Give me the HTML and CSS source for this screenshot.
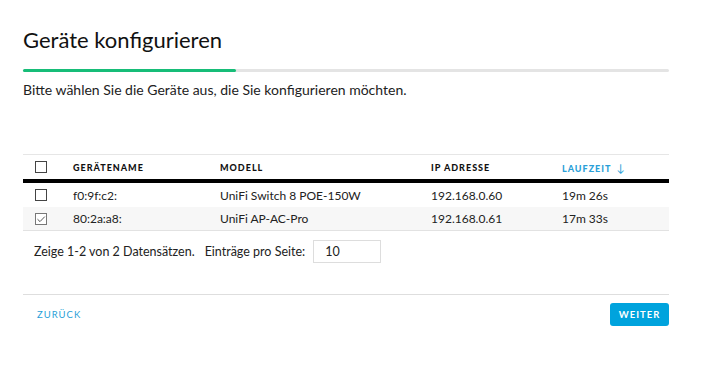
FILE: index.html
```html
<!DOCTYPE html>
<html lang="de">
<head>
<meta charset="utf-8">
<link rel="stylesheet" href="styles.css">
</head>
<body>
<div class="wizard">
  <h1 class="title">Geräte konfigurieren</h1>
  <div class="progress"><div class="progress-fill" style="width:33%"></div></div>
  <p class="subtitle">Bitte wählen Sie die Geräte aus, die Sie konfigurieren möchten.</p>

  <div class="table">
    <div class="row head">
      <div class="cell c-check"><span class="box"></span></div>
      <div class="cell c-name">Gerätename</div>
      <div class="cell c-model">Modell</div>
      <div class="cell c-ip">IP Adresse</div>
      <div class="cell c-up sorted">Laufzeit <span class="arrow">↓</span></div>
    </div>
    <div class="row">
      <div class="cell c-check"><span class="box"></span></div>
      <div class="cell c-name">f0:9f:c2:<span class="mask"></span></div>
      <div class="cell c-model">UniFi Switch 8 POE-150W</div>
      <div class="cell c-ip">192.168.0.60</div>
      <div class="cell c-up">19m 26s</div>
    </div>
    <div class="row alt">
      <div class="cell c-check"><span class="box checked"><svg viewBox="0 0 12 12" width="12" height="12"><path d="M2.5 6.2 L5 8.6 L9.8 3.6" fill="none" stroke="#555" stroke-width="1"/></svg></span></div>
      <div class="cell c-name">80:2a:a8:<span class="mask"></span></div>
      <div class="cell c-model">UniFi AP-AC-Pro</div>
      <div class="cell c-ip">192.168.0.61</div>
      <div class="cell c-up">17m 33s</div>
    </div>
  </div>

  <div class="pager">
    <span>Zeige 1-2 von 2 Datensätzen.</span>
    <span class="per">Einträge pro Seite:</span>
    <span class="input">10</span>
  </div>

  <div class="actions">
    <span class="back">Zurück</span>
    <span class="next">Weiter</span>
  </div>
</div>
</body>
</html>
```

FILE: styles.css
```css
* { box-sizing: border-box; }
body {
  margin: 0;
  background: #fff;
  font-family: Lato, "Open Sans", sans-serif;
  color: #1b1b1b;
}
.wizard {
  width: 646px;
  margin-left: 23px;
  padding-top: 27px;
}
.title {
  margin: 0;
  font-size: 22px;
  line-height: 26px;
  font-weight: 400;
  color: #111;
}
.progress {
  margin-top: 16px;
  height: 3px;
  background: #e4e4e4;
  border-radius: 2px;
}
.progress-fill {
  height: 3px;
  background: #17bd78;
  border-radius: 2px;
}
.subtitle {
  margin: 9px 0 0;
  font-size: 14px;
  line-height: 17px;
  color: #222;
}
.table {
  margin-top: 56px;
  border-top: 1px solid #e6e6e6;
  border-bottom: 1px solid #e2e2e2;
}
.row {
  display: flex;
  align-items: center;
  height: 24px;
  font-size: 12px;
  color: #222;
}
.row.head {
  height: 28px;
  border-bottom: 4px solid #000;
  font-size: 9px;
  font-weight: 900;
  letter-spacing: 1px;
  text-transform: uppercase;
  color: #111;
}
.row.alt { background: #f7f7f7; height: 23px; }
.cell { white-space: nowrap; }
.c-check { width: 50px; padding-left: 12px; display: flex; }
.c-name { width: 147px; }
.c-model { width: 211px; }
.c-ip { width: 131px; }
.c-up { flex: 1; }
.sorted { color: #2a9fd8; }
.arrow { font-weight: 400; font-size: 11px; margin-left: 2px; }
.box {
  width: 12px;
  height: 12px;
  border: 1px solid #444;
  background: #fff;
  display: flex;
}
.box.checked { border-color: #777; }
.box svg { margin: -1px; }
.mask { display: inline-block; width: 30px; }
.pager {
  display: flex;
  align-items: center;
  padding: 9px 0 0 11px;
  font-size: 12.5px;
  color: #222;
}
.per { margin-left: 10px; }
.input {
  margin-left: 8px;
  width: 68px;
  height: 23px;
  border: 1px solid #ddd;
  padding-left: 11px;
  display: flex;
  align-items: center;
  font-size: 12.5px;
}
.actions {
  margin-top: 31px;
  border-top: 1px solid #dedede;
  padding-top: 8px;
  display: flex;
  justify-content: space-between;
  align-items: center;
}
.back {
  margin-left: 14px;
  font-size: 9.5px;
  letter-spacing: 1px;
  text-transform: uppercase;
  color: #2a9fd8;
}
.next {
  width: 59px;
  height: 23px;
  background: #00a3dd;
  border-radius: 3px;
  color: #fff;
  font-size: 9.5px;
  font-weight: 700;
  letter-spacing: 1px;
  text-transform: uppercase;
  display: flex;
  align-items: center;
  justify-content: center;
}
```
